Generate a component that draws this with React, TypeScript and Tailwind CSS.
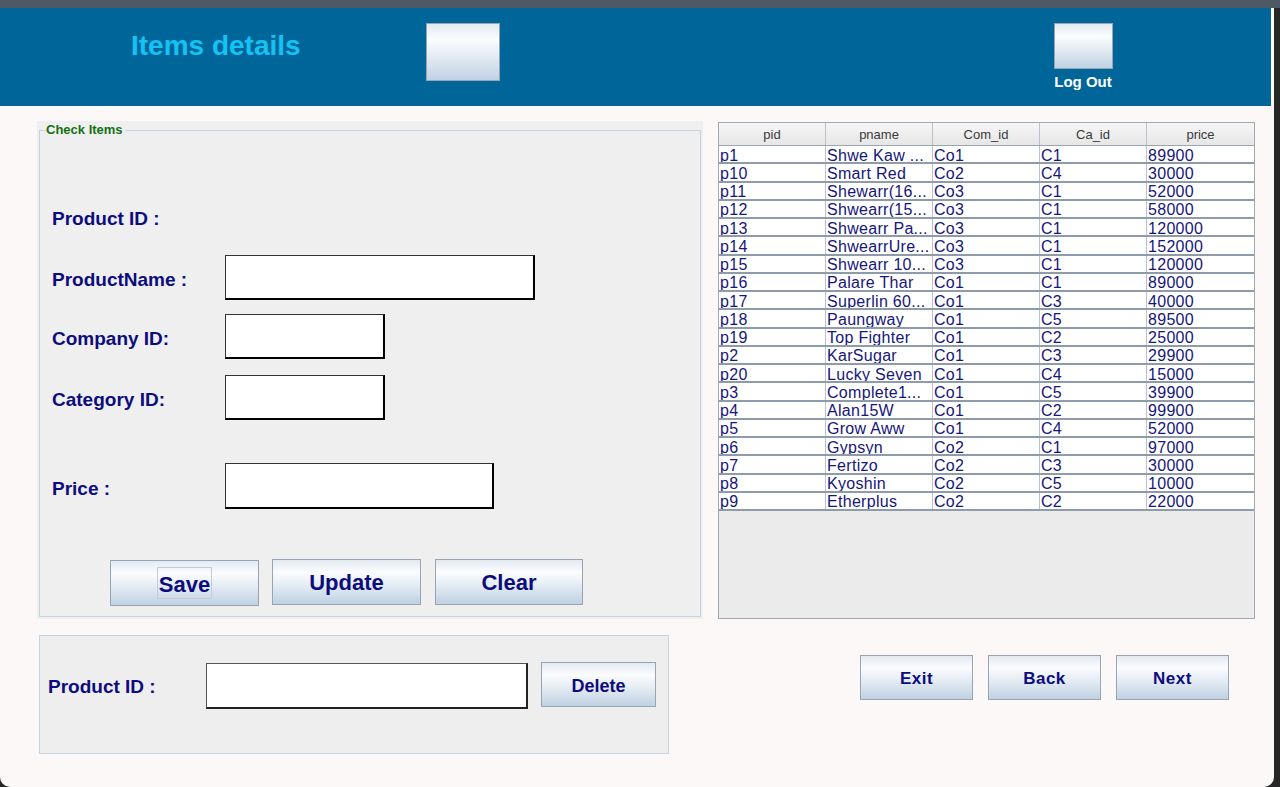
import React from "react";

const btnBg =
  "bg-[linear-gradient(to_bottom,#e3eaf2_0%,#fbfcfe_28%,#e6edf4_55%,#c0d1e3_100%)] border border-[#98a4b0]";

const rows: [string, string, string, string, string][] = [
  ["p1", "Shwe Kaw ...", "Co1", "C1", "89900"],
  ["p10", "Smart Red", "Co2", "C4", "30000"],
  ["p11", "Shewarr(16...", "Co3", "C1", "52000"],
  ["p12", "Shwearr(15...", "Co3", "C1", "58000"],
  ["p13", "Shwearr Pa...", "Co3", "C1", "120000"],
  ["p14", "ShwearrUre...", "Co3", "C1", "152000"],
  ["p15", "Shwearr 10...", "Co3", "C1", "120000"],
  ["p16", "Palare Thar", "Co1", "C1", "89000"],
  ["p17", "Superlin 60...", "Co1", "C3", "40000"],
  ["p18", "Paungway", "Co1", "C5", "89500"],
  ["p19", "Top Fighter", "Co1", "C2", "25000"],
  ["p2", "KarSugar", "Co1", "C3", "29900"],
  ["p20", "Lucky Seven", "Co1", "C4", "15000"],
  ["p3", "Complete1...", "Co1", "C5", "39900"],
  ["p4", "Alan15W", "Co1", "C2", "99900"],
  ["p5", "Grow Aww", "Co1", "C4", "52000"],
  ["p6", "Gypsyn", "Co2", "C1", "97000"],
  ["p7", "Fertizo", "Co2", "C3", "30000"],
  ["p8", "Kyoshin", "Co2", "C5", "10000"],
  ["p9", "Etherplus", "Co2", "C2", "22000"],
];

const headers = ["pid", "pname", "Com_id", "Ca_id", "price"];

function Label({ children, low = true }: { children: React.ReactNode; low?: boolean }) {
  return (
    <div
      className={`w-[173px] ${low ? "pt-[4px]" : ""} text-[19px] font-bold text-[#0c0c7e] leading-none`}
    >
      {children}
    </div>
  );
}

function Input({ w }: { w: string }) {
  return (
    <div
      className={`${w} h-full bg-white border border-[#333] border-b-2 border-r-2 border-b-black border-r-black`}
    />
  );
}

export default function App() {
  return (
    <div className="w-[1280px] h-[787px] bg-[#272727] flex flex-col overflow-hidden font-['Liberation_Sans',Arial,sans-serif]">
      <div className="h-[8px] bg-[#4f5966] shrink-0" />
      <div className="flex-1 flex">
        <div className="w-[1274px] flex flex-col bg-[#fcf8f8] rounded-b-[10px] overflow-hidden">
          {/* Header */}
          <div className="h-[98px] shrink-0 bg-[#00669a] mr-[3px] flex items-start pt-[15px]">
            <div className="w-[295px] ml-[131px] mt-[7px] text-[28px] font-bold text-[#14c3f3] leading-[32px]">
              Items details
            </div>
            <div className={`w-[74px] h-[58px] ${btnBg}`} />
            <div className="ml-[553px] w-[60px] flex flex-col items-center">
              <div className={`w-[59px] h-[46px] ${btnBg}`} />
              <div className="mt-[4px] text-[15px] font-bold text-white leading-[17px] whitespace-nowrap">
                Log Out
              </div>
            </div>
          </div>

          {/* Body */}
          <div className="flex pl-[37px] pt-[15px]">
            {/* Left column */}
            <div className="w-[666px] flex flex-col">
              <div className="h-[498px] bg-[#efefef] px-[2px] pt-[9px] pb-[2px]">
                <div className="relative h-full border border-[#c6d3e0]">
                  <div className="absolute -top-[9px] left-[6px] bg-[#efefef] pr-[2px] text-[13px] font-bold text-[#137013] leading-[16px]">
                    Check Items
                  </div>
                  <div className="flex flex-col pl-[12px] pt-[65px]">
                    <div className="h-[44px] flex items-center">
                      <Label low={false}>Product ID :</Label>
                    </div>
                    <div className="h-[45px] mt-[15px] flex items-center">
                      <Label>ProductName :</Label>
                      <Input w="w-[310px]" />
                    </div>
                    <div className="h-[45px] mt-[14px] flex items-center">
                      <Label>Company ID:</Label>
                      <Input w="w-[160px]" />
                    </div>
                    <div className="h-[45px] mt-[16px] flex items-center">
                      <Label>Category ID:</Label>
                      <Input w="w-[160px]" />
                    </div>
                    <div className="h-[46px] mt-[43px] flex items-center">
                      <Label>Price :</Label>
                      <Input w="w-[269px]" />
                    </div>
                    <div className="mt-[50px] ml-[58px] flex items-start">
                      <div
                        className={`mt-[1px] w-[149px] h-[46px] ${btnBg} flex items-center justify-center`}
                      >
                        <span className="px-[1px] pt-[4px] pb-[1px] border border-[#c3ccd6] text-[22px] font-bold text-[#0c0c7e] leading-[25px]">
                          Save
                        </span>
                      </div>
                      <div
                        className={`ml-[13px] w-[149px] h-[46px] ${btnBg} flex items-center justify-center text-[22px] font-bold text-[#0c0c7e]`}
                      >
                        Update
                      </div>
                      <div
                        className={`ml-[14px] w-[148px] h-[46px] ${btnBg} flex items-center justify-center text-[22px] font-bold text-[#0c0c7e]`}
                      >
                        Clear
                      </div>
                    </div>
                  </div>
                </div>
              </div>

              <div className="mt-[16px] ml-[2px] w-[630px] h-[119px] bg-[#eeeeee] border border-[#c6d3e0] flex items-start pl-[8px] pt-[27px]">
                <div className="w-[158px] h-[46px] flex items-center text-[19px] font-bold text-[#0c0c7e] leading-none">
                  Product ID :
                </div>
                <div className="w-[322px] h-[46px] bg-white border border-[#555] border-b-2 border-r-2 border-b-[#222] border-r-[#222]" />
                <div
                  className={`ml-[13px] -mt-[1px] w-[115px] h-[45px] ${btnBg} flex items-center justify-center pt-[4px] text-[18px] font-bold text-[#0c0c7e]`}
                >
                  Delete
                </div>
              </div>
            </div>

            {/* Right column */}
            <div className="ml-[15px] mt-[1px] w-[537px] flex flex-col">
              <div className="h-[497px] bg-[#ebebeb] border border-[#a2a9b1] flex flex-col">
                <div className="h-[23px] grid grid-cols-5 bg-[linear-gradient(to_bottom,#f6f6f6,#e6e6e6)] border-b border-[#9aa5b2]">
                  {headers.map((h, i) => (
                    <div
                      key={h}
                      className={`flex items-center justify-center pt-[2px] text-[13px] text-[#3a3a3a] ${
                        i < 4 ? "border-r border-[#b9c2cc]" : ""
                      }`}
                    >
                      {h}
                    </div>
                  ))}
                </div>
                {rows.map((r) => (
                  <div
                    key={r[0]}
                    className="h-[18.25px] grid grid-cols-5 bg-white border-b-2 border-[#8e9bab]"
                  >
                    {r.map((c, i) => (
                      <div
                        key={i}
                        className={`pl-[1px] pt-[3px] flex items-center text-[16px] leading-none tracking-[0.3px] text-[#16167c] whitespace-nowrap overflow-hidden ${
                          i < 4 ? "border-r border-[#b7c2d2]" : ""
                        }`}
                      >
                        {c}
                      </div>
                    ))}
                  </div>
                ))}
              </div>

              <div className="mt-[36px] ml-[142px] flex">
                {["Exit", "Back", "Next"].map((b, i) => (
                  <div
                    key={b}
                    className={`${i > 0 ? "ml-[15px]" : ""} w-[113px] h-[45px] ${btnBg} flex items-center justify-center pt-[2px] text-[17px] font-bold tracking-[0.5px] text-[#0c0c7e]`}
                  >
                    {b}
                  </div>
                ))}
              </div>
            </div>
          </div>
        </div>
      </div>
    </div>
  );
}
